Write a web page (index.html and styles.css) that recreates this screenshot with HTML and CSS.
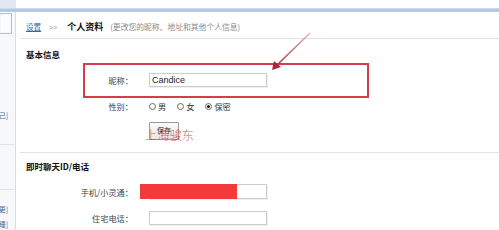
FILE: index.html
```html
<!DOCTYPE html>
<html lang="zh-CN">
<head>
<meta charset="utf-8">
<title>个人资料</title>
<link rel="stylesheet" href="styles.css">
</head>
<body>
<div class="page">
  <div class="topgap"></div>
  <div class="bluebar"></div>
  <div class="main">
    <aside class="sidebar">
      <div class="sidebox"></div>
      <div class="sideitem s1"><span>[修改自己]</span></div>
      <div class="sidediv d1"></div>
      <div class="sidediv d2"></div>
      <div class="sideitem s2"><span>[更]</span></div>
      <div class="sideitem s3"><span>[睡]</span></div>
    </aside>
    <section class="content">
      <div class="crumbs">
        <a class="link" href="#">设置</a>
        <span class="sep">&gt;&gt;</span>
        <span class="current">个人资料</span>
        <span class="desc">(更改您的昵称、地址和其他个人信息)</span>
      </div>
      <div class="section first">
        <div class="title">基本信息</div>
        <div class="row nick">
          <span class="label">昵称：</span>
          <span class="input">Candice</span>
        </div>
        <div class="row gender">
          <span class="label">性别：</span>
          <span class="radios">
            <span class="radio"></span><span class="opt">男</span>
            <span class="radio"></span><span class="opt">女</span>
            <span class="radio checked"></span><span class="opt">保密</span>
          </span>
        </div>
        <div class="row save">
          <span class="label"></span>
          <span class="button">保存</span>
        </div>
      </div>
      <div class="section second">
        <div class="title">即时聊天ID/电话</div>
        <div class="row phone">
          <span class="label">手机/小灵通：</span>
          <span class="input wide"><span class="mask"></span></span>
        </div>
        <div class="row home">
          <span class="label">住宅电话：</span>
          <span class="input"></span>
        </div>
      </div>
    </section>
  </div>
  <div class="redbox"></div>
  <svg class="arrow" width="499" height="230" viewBox="0 0 499 230">
    <defs>
      <linearGradient id="ag" x1="310" y1="33" x2="273" y2="69" gradientUnits="userSpaceOnUse">
        <stop offset="0" stop-color="#e8b8bc"/>
        <stop offset="1" stop-color="#a8283a"/>
      </linearGradient>
    </defs>
    <line x1="310" y1="33" x2="277" y2="65" stroke="url(#ag)" stroke-width="1.6"/>
    <polygon points="272,70 274,61 281,67" fill="#a8283a"/>
  </svg>
  <div class="watermark">上海骏东</div>
</div>
</body>
</html>
```
FILE: styles.css
```css
html, body {
  margin: 0;
  padding: 0;
  background: #ffffff;
}
.page {
  position: relative;
  width: 499px;
  height: 230px;
  overflow: hidden;
  font-family: "Noto Sans CJK SC", "Liberation Sans", sans-serif;
  font-size: 8px;
  color: #333333;
}
.topgap {
  height: 8px;
  background: linear-gradient(to right, #e2e8ef 0, #e2e8ef 16px, #ffffff 16px);
}
.bluebar {
  height: 4px;
  background: linear-gradient(to bottom, #cfe0f1, #a9c3df 60%, #c4d6ea);
}
.main {
  display: flex;
  height: 218px;
}
.sidebar {
  position: relative;
  width: 15px;
  border-right: 1px solid #d6dde6;
  background: #f6f8fa;
  flex: none;
}
.sidebox {
  margin-top: 1px;
  width: 11px;
  height: 19px;
  border: 1px solid #b4c3d3;
  border-left: none;
  background: #fdfdfd;
  box-shadow: inset 0 0 2px #dfe6ee;
}
.sideitem {
  display: flex;
  justify-content: flex-end;
  width: 8px;
  overflow: hidden;
  white-space: nowrap;
  color: #4a6a96;
  font-size: 7px;
  line-height: 10px;
}
.s1 { margin-top: 76px; }
.sidediv {
  height: 1px;
  background: #dde3ea;
  width: 15px;
}
.d1 { margin-top: 24px; }
.d2 { margin-top: 44px; }
.s2 { margin-top: 14px; }
.s3 { margin-top: 5px; }

.content {
  flex: 1;
}
.crumbs {
  margin-left: 4px;
  padding-left: 6px;
  padding-top: 4px;
  height: 22px;
  line-height: 22px;
  border-bottom: 1px solid #e3e3e3;
  white-space: nowrap;
  display: flex;
  align-items: baseline;
}
.link {
  color: #3a64a8;
  text-decoration: underline;
  font-size: 7.5px;
}
.sep {
  color: #999999;
  font-size: 7px;
  margin-left: 8px;
  font-family: "Liberation Sans", sans-serif;
}
.current {
  font-weight: bold;
  font-size: 9px;
  color: #111111;
  margin-left: 10px;
}
.desc {
  color: #8a8a8a;
  font-size: 7.8px;
  margin-left: 7px;
}
.section {
  margin-left: 4px;
  border-bottom: 1px solid #e3e3e3;
}
.section.first {
  height: 113px;
}
.section.second {
  border-bottom: none;
}
.title {
  font-weight: bold;
  font-size: 8.5px;
  color: #111111;
  line-height: 12px;
  padding-left: 6px;
  padding-top: 9px;
}
.second .title {
  padding-top: 7px;
}
.row {
  display: flex;
  align-items: center;
  height: 14px;
}
.label {
  width: 113px;
  flex: none;
  text-align: right;
  color: #444444;
  margin-right: 16px;
  white-space: nowrap;
  font-size: 8.2px;
}
.nick { margin-top: 13px; }
.gender { margin-top: 12px; }
.save { margin-top: 9px; height: 18px; }
.phone { margin-top: 12px; height: 15px; }
.home { margin-top: 12px; }
.input {
  position: relative;
  box-sizing: border-box;
  width: 118px;
  height: 100%;
  border: 1px solid #cccccc;
  background: #ffffff;
  font-family: "Liberation Sans", sans-serif;
  font-size: 9px;
  color: #222222;
  line-height: 12px;
  padding-left: 2px;
  box-shadow: 1px 1px 0 #f0f0f0;
}
.mask {
  position: absolute;
  left: -10px;
  top: -1px;
  width: 97px;
  height: 15px;
  background: #f23a3a;
}
.radios {
  display: flex;
  align-items: center;
}
.radio {
  box-sizing: border-box;
  width: 7px;
  height: 7px;
  border: 1px solid #6a6a6a;
  border-radius: 50%;
  background: #ffffff;
  position: relative;
}
.radio.checked::after {
  content: "";
  position: absolute;
  left: 1px;
  top: 1px;
  width: 3px;
  height: 3px;
  border-radius: 50%;
  background: #111111;
}
.opt {
  margin-left: 2px;
  margin-right: 11px;
  color: #333333;
  font-size: 8.2px;
}
.button {
  box-sizing: border-box;
  width: 30px;
  height: 18px;
  border: 1px solid #9a9a9a;
  border-radius: 1px;
  background: linear-gradient(#fbfbfb, #e8e8e8);
  font-size: 7px;
  text-align: center;
  line-height: 14px;
  color: #222222;
}
.redbox {
  position: absolute;
  left: 83px;
  top: 63px;
  width: 286px;
  height: 35px;
  box-sizing: border-box;
  border: 2px solid #d23e4c;
}
.arrow {
  position: absolute;
  left: 0;
  top: 0;
}
.watermark {
  position: absolute;
  left: 145px;
  top: 128px;
  font-size: 12.5px;
  line-height: 14px;
  color: rgba(205, 60, 60, 0.85);
  font-weight: 300;
  letter-spacing: -0.3px;
}
```
